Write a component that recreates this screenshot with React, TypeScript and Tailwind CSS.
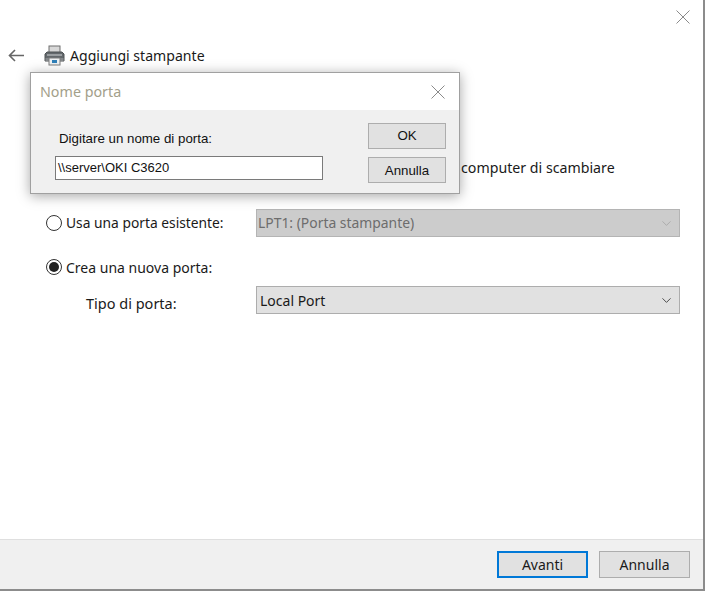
import { ChevronDown } from 'lucide-react';

const uiFont = "font-['Noto_Sans','Open_Sans',sans-serif]";

function CloseIcon() {
  return (
    <svg width="14" height="14" viewBox="0 0 14 14" className="shrink-0">
      <path d="M0.5 0.5 L13.5 13.5 M13.5 0.5 L0.5 13.5" stroke="#8a8a8a" strokeWidth="1" fill="none" />
    </svg>
  );
}

function BackArrow() {
  return (
    <svg width="17" height="13" viewBox="0 0 17 13" className="shrink-0">
      <path d="M16 6.5 H1.5 M7 1 L1.5 6.5 L7 12" stroke="#666" strokeWidth="1.6" fill="none" />
    </svg>
  );
}

function PrinterIcon() {
  return (
    <svg width="21" height="21" viewBox="0 0 21 21" className="shrink-0">
      <rect x="5" y="1" width="11" height="7" fill="#d8d8d8" stroke="#6f6f6f" />
      <path d="M1 9 L3 7 H18 L20 9 V16 H1 Z" fill="#63686c" stroke="#4e5255" />
      <rect x="3" y="9" width="15" height="2" fill="#9a9ea1" />
      <rect x="1.5" y="13" width="18" height="3" fill="#85898c" />
      <rect x="5" y="13" width="11" height="7" fill="#eef1f3" stroke="#7d7d7d" />
      <rect x="8" y="15" width="5" height="3" fill="#2f7fb8" />
    </svg>
  );
}

function Radio({ checked }: { checked?: boolean }) {
  return (
    <span className="flex h-[16px] w-[16px] shrink-0 items-center justify-center rounded-full border border-[#333] bg-white">
      {checked && <span className="h-[10px] w-[10px] rounded-full bg-[#222]" />}
    </span>
  );
}

function PortDialog() {
  return (
    <div className="absolute left-[30px] top-[72px] flex h-[122px] w-[430px] flex-col border border-[#a0a0a0] bg-white shadow-[0_2px_12px_rgba(0,0,0,0.35)]">
      <div className="flex h-[37px] shrink-0 items-center justify-between pl-[9px] pr-[14px]">
        <span className="text-[14.3px] text-[#a3a08a]">Nome porta</span>
        <CloseIcon />
      </div>
      <div className="flex flex-1 justify-between bg-[#f0f0f0] pl-[24px] pr-[13px] font-['Liberation_Sans',Arial,sans-serif]">
        <div className="flex flex-col pt-[20px]">
          <span className="pl-[4px] text-[13.3px] leading-[18px] text-[#111]">Digitare un nome di porta:</span>
          <div className="mt-[8px] flex h-[24px] w-[268px] items-center border border-[#7a7a7a] bg-white pl-[2px] text-[13px] text-[#111]">
            {'\\\\server\\OKI C3620'}
          </div>
        </div>
        <div className="flex flex-col gap-[8px] pt-[13px]">
          <button className="h-[26px] w-[78px] border border-[#adadad] bg-[#e1e1e1] text-[13.3px] text-[#111]">OK</button>
          <button className="h-[26px] w-[78px] border border-[#adadad] bg-[#e1e1e1] pt-[2px] text-[13.3px] text-[#111]">Annulla</button>
        </div>
      </div>
    </div>
  );
}

export default function App() {
  return (
    <div className={`relative flex h-[591px] w-[705px] flex-col border-b-2 border-r-2 border-[#8c8c8c] bg-white text-[14px] text-[#1a1a1a] ${uiFont}`}>
      <div className="flex justify-end pr-[13px] pt-[10px]">
        <CloseIcon />
      </div>

      <div className="mt-[21px] flex items-center pl-[8px]">
        <BackArrow />
        <span className="ml-[19px]"><PrinterIcon /></span>
        <span className="ml-[5px] text-[14.1px]">Aggiungi stampante</span>
      </div>

      <div className="flex-1 pl-[46px] pr-[23px]">
        <p className="mt-[92px] pl-[415px] text-[14.2px] leading-[20px]">computer di scambiare</p>

        <div className="mt-[31px] flex h-[28px] items-center">
          <Radio />
          <span className="ml-[4px] w-[190px] text-[13.8px]">Usa una porta esistente:</span>
          <div className="flex h-[28px] flex-1 items-center justify-between border border-[#b4b4b4] bg-[#cccccc] pl-[1px] pr-[5px] text-[13.9px] text-[#6d6d6d]">
            <span>LPT1: (Porta stampante)</span>
            <ChevronDown size={15} strokeWidth={1} className="text-[#999]" />
          </div>
        </div>

        <div className="mt-[20px] flex h-[20px] items-center">
          <Radio checked />
          <span className="ml-[4px]">Crea una nuova porta:</span>
        </div>

        <div className="mt-[9px] flex h-[28px] items-center">
          <span className="w-[210px] pl-[40px] pt-[7px] text-[14.5px]">Tipo di porta:</span>
          <div className="flex h-[28px] flex-1 items-center justify-between border border-[#adadad] bg-[#e1e1e1] pl-[3px] pr-[5px]">
            <span>Local Port</span>
            <ChevronDown size={15} strokeWidth={1.25} className="text-[#222]" />
          </div>
        </div>
      </div>

      <div className="flex h-[50px] shrink-0 items-start justify-end gap-[11px] border-t border-[#dfdfdf] bg-[#f0f0f0] pr-[13px] pt-[11px]">
        <button className="h-[27px] w-[91px] border-2 border-[#0078d7] bg-[#e1e1e1]">Avanti</button>
        <button className="h-[27px] w-[91px] border border-[#adadad] bg-[#e1e1e1]">Annulla</button>
      </div>

      <PortDialog />
    </div>
  );
}
